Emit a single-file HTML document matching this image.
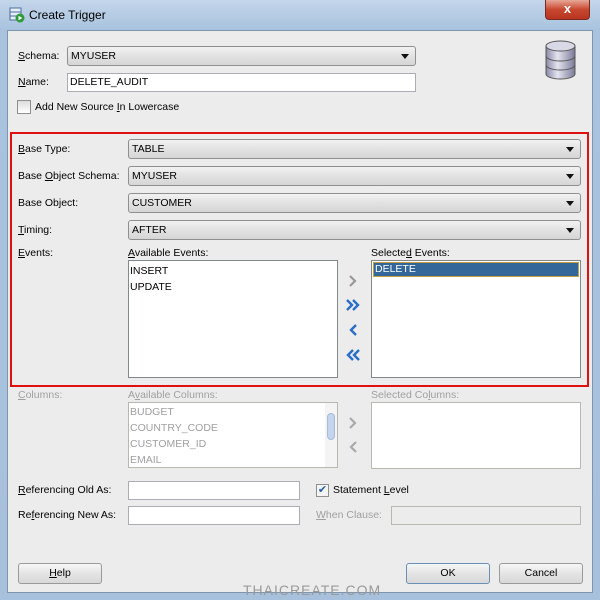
<!DOCTYPE html>
<html><head><meta charset="utf-8"><style>
*{box-sizing:border-box;margin:0;padding:0}
body{width:600px;height:600px;overflow:hidden;background:#aac3dd;font-family:"Liberation Sans",sans-serif;font-size:10.5px;color:#000;position:relative}
.a{position:absolute;white-space:nowrap}
.frame{position:absolute;left:0;top:0;width:600px;height:600px;background:linear-gradient(180deg,#c3d6ea 0,#a9c3df 30px,#a7c0dc 100%)}
.client{position:absolute;left:7px;top:30px;width:586px;height:563px;background:#ececec;border:1px solid #7f94ad}
.combo{position:absolute;height:20px;border:1px solid #8e8f8f;border-radius:3px;background:linear-gradient(#f2f2f2,#e2e2e2 50%,#d6d6d6);padding-left:3px;line-height:18px}
.combo:after{content:"";position:absolute;right:6px;top:7px;border-left:4px solid transparent;border-right:4px solid transparent;border-top:5px solid #111}
.inp{position:absolute;height:19px;border:1px solid #abadb3;background:#fff;padding-left:2px;line-height:17px}
.list{position:absolute;background:#fff;border:1px solid #828790}
.dis{color:#a0a0a0}
.btn{position:absolute;height:21px;border:1px solid #9a9a9a;border-radius:3px;background:linear-gradient(#f6f6f6,#e4e4e4 50%,#d8d8d8);text-align:center;line-height:19px}
u{text-decoration:underline}
</style></head><body>
<div class="frame"></div>
<svg class="a" style="left:9px;top:7px" width="16" height="16" viewBox="0 0 16 16"><rect x="1" y="1" width="11" height="12" fill="#e8eef8" stroke="#4a6d9c"/><line x1="1" y1="5" x2="12" y2="5" stroke="#4a6d9c"/><line x1="1" y1="9" x2="12" y2="9" stroke="#4a6d9c"/><circle cx="11" cy="11" r="4.5" fill="#2f9a3a"/><path d="M9.5 8.8 L13.3 11 L9.5 13.2Z" fill="#fff"/></svg>
<div class="a" style="left:29px;top:8px;font-size:12px">Create Trigger</div>
<div class="a" style="left:545px;top:0;width:45px;height:20px;border:1px solid #7a2a22;border-top:none;border-radius:0 0 4px 4px;background:linear-gradient(#e8a898,#c8472f 50%,#b83520);color:#fff;font-weight:bold;text-align:center;font-size:13px;line-height:18px">x</div>
<div class="client"></div>

<div class="a" style="left:18px;top:50px"><u>S</u>chema:</div>
<div class="combo" style="left:67px;top:46px;width:349px">MYUSER</div>
<div class="a" style="left:18px;top:76px"><u>N</u>ame:</div>
<div class="inp" style="left:67px;top:73px;width:349px">DELETE_AUDIT</div>
<div class="a" style="left:17px;top:100px;width:14px;height:14px;border:1px solid #8e8f8f;background:linear-gradient(#ddd,#fff)"></div>
<div class="a" style="left:35px;top:101px">Add New Source <u>I</u>n Lowercase</div>
<svg class="a" style="left:543px;top:40px" width="36" height="42" viewBox="0 0 36 42"><defs><linearGradient id="g" x1="0" x2="1"><stop offset="0" stop-color="#8a8aa8"/><stop offset=".4" stop-color="#e4e4f0"/><stop offset="1" stop-color="#7a7a98"/></linearGradient></defs><path d="M3 6 V34 A14.5 5 0 0 0 32 34 V6Z" fill="url(#g)" stroke="#555" /><ellipse cx="17.5" cy="6" rx="14.5" ry="5" fill="#d8d8e6" stroke="#555"/><path d="M3 16 A14.5 5 0 0 0 32 16 M3 25 A14.5 5 0 0 0 32 25" fill="none" stroke="#555"/></svg>

<div class="a" style="left:10px;top:132px;width:579px;height:255px;border:2px solid #e01010"></div>
<div class="a" style="left:18px;top:143px"><u>B</u>ase Type:</div>
<div class="combo" style="left:128px;top:139px;width:453px">TABLE</div>
<div class="a" style="left:18px;top:170px">Base <u>O</u>bject Schema:</div>
<div class="combo" style="left:128px;top:166px;width:453px">MYUSER</div>
<div class="a" style="left:18px;top:197px">Base Ob<u>j</u>ect:</div>
<div class="combo" style="left:128px;top:193px;width:453px">CUSTOMER</div>
<div class="a" style="left:18px;top:224px"><u>T</u>iming:</div>
<div class="combo" style="left:128px;top:220px;width:453px">AFTER</div>
<div class="a" style="left:18px;top:247px"><u>E</u>vents:</div>
<div class="a" style="left:128px;top:247px"><u>A</u>vailable Events:</div>
<div class="list" style="left:128px;top:260px;width:210px;height:118px"><div style="padding:2px 1px;line-height:16px">INSERT<br>UPDATE</div></div>
<div class="a" style="left:371px;top:247px">Selecte<u>d</u> Events:</div>
<div class="list" style="left:371px;top:260px;width:210px;height:118px"><div style="margin:1px;height:15px;background:#336699;border:1px solid #c8a040;color:#fff;line-height:13px;padding-left:1px">DELETE</div></div>
<svg class="a" style="left:345px;top:272px" width="18" height="92" viewBox="0 0 18 92">
<path d="M5 4 L10 9 L5 14" fill="none" stroke="#999" stroke-width="2.2"/>
<path d="M2 28 L7 33 L2 38 M8 28 L13 33 L8 38" fill="none" stroke="#2a6ec8" stroke-width="2.4"/>
<path d="M11 53 L6 58 L11 63" fill="none" stroke="#2a6ec8" stroke-width="2.4"/>
<path d="M8 78 L3 83 L8 88 M14 78 L9 83 L14 88" fill="none" stroke="#2a6ec8" stroke-width="2.4"/>
</svg>

<div class="a dis" style="left:18px;top:389px"><u>C</u>olumns:</div>
<div class="a dis" style="left:128px;top:389px">A<u>v</u>ailable Columns:</div>
<div class="list dis" style="left:128px;top:402px;width:210px;height:66px;border-color:#b8b8b0"><div style="padding:1px 1px;line-height:16px">BUDGET<br>COUNTRY_CODE<br>CUSTOMER_ID<br>EMAIL</div>
<div style="position:absolute;right:0;top:0;width:12px;height:64px;background:#f4f4f4"><div style="position:absolute;left:2px;top:10px;width:8px;height:27px;border-radius:4px;background:#c4d6ee;border:1px solid #a8bcd8"></div></div></div>
<div class="a dis" style="left:371px;top:389px">Selected Co<u>l</u>umns:</div>
<div class="list" style="left:371px;top:402px;width:210px;height:67px;border-color:#b8b8b0"></div>
<svg class="a" style="left:345px;top:414px" width="18" height="42" viewBox="0 0 18 42">
<path d="M5 4 L10 9 L5 14" fill="none" stroke="#aaa" stroke-width="2.2"/>
<path d="M11 28 L6 33 L11 38" fill="none" stroke="#aaa" stroke-width="2.2"/>
</svg>

<div class="a" style="left:18px;top:484px"><u>R</u>eferencing Old As:</div>
<div class="inp" style="left:128px;top:481px;width:172px"></div>
<div class="a" style="left:18px;top:509px">Re<u>f</u>erencing New As:</div>
<div class="inp" style="left:128px;top:506px;width:172px"></div>
<div class="a" style="left:316px;top:484px;width:13px;height:13px;border:1px solid #8e8f8f;background:#f4f4f4;color:#2a5ca8;font-size:11px;line-height:11px;text-align:center">✔</div>
<div class="a" style="left:333px;top:484px">Statement <u>L</u>evel</div>
<div class="a dis" style="left:316px;top:509px"><u>W</u>hen Clause:</div>
<div class="inp" style="left:391px;top:506px;width:190px;background:#ececec;border-color:#b8b8b0"></div>

<div class="btn" style="left:18px;top:563px;width:84px"><u>H</u>elp</div>
<div class="btn" style="left:406px;top:563px;width:84px;border-color:#6a8fb8">OK</div>
<div class="btn" style="left:499px;top:563px;width:84px">Cancel</div>
<div class="a" style="left:243px;top:582px;font-size:14px;color:#9a9a9a;letter-spacing:1px">THAICREATE.COM</div>
</body></html>
